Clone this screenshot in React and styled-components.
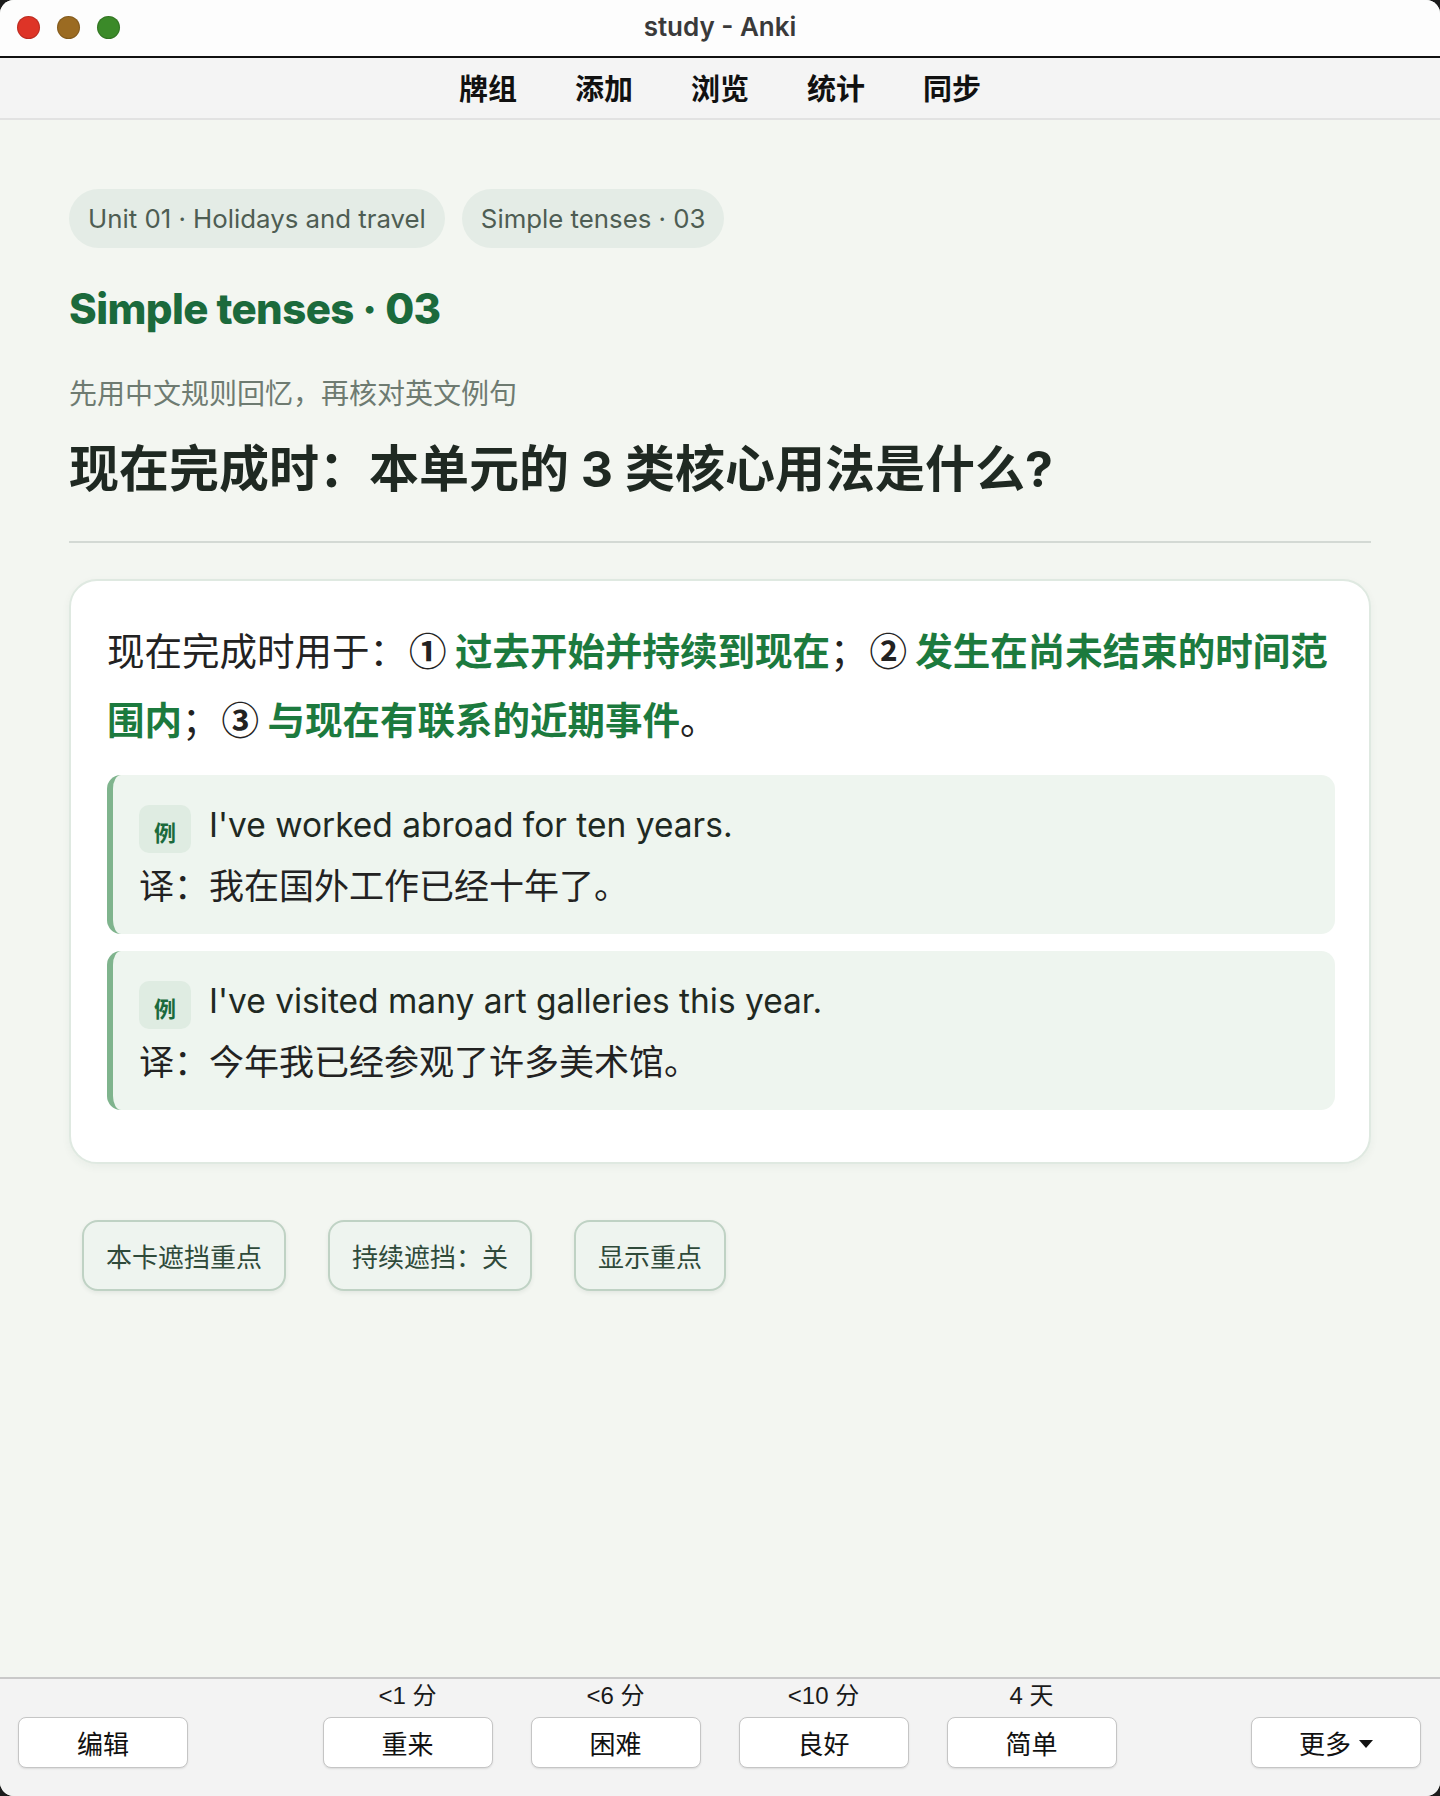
import styled, { createGlobalStyle } from "styled-components";

const GlobalStyle = createGlobalStyle`
  html, body {
    margin: 0;
    padding: 0;
    background: #1c1c1c;
  }
  * {
    box-sizing: border-box;
  }
`;

const SANS = `Inter, "Noto Sans CJK SC", sans-serif`;
const UI = `"Liberation Sans", "Noto Sans CJK SC", sans-serif`;

const Window = styled.div`
  min-height: 1796px;
  display: flex;
  flex-direction: column;
  border-radius: 14px;
  overflow: hidden;
  background: #f3f6f1;
  font-family: ${SANS};
`;

const TitleBar = styled.div`
  height: 58px;
  background: #fdfdfd;
  border-bottom: 2px solid #111;
  display: flex;
  align-items: center;
  position: relative;
  padding: 0 0 2px 17px;
`;

const Lights = styled.div`
  display: flex;
  gap: 17px;
`;

const Light = styled.span`
  width: 23px;
  height: 23px;
  border-radius: 50%;
  background: ${p => p.color};
  box-shadow: inset 0 0 0 1px rgba(0, 0, 0, 0.15);
`;

const WindowTitle = styled.div`
  position: absolute;
  left: 0;
  right: 0;
  top: 11px;
  text-align: center;
  font-size: 26px;
  font-weight: 600;
  color: #3a3a3a;
  pointer-events: none;
`;

const Toolbar = styled.nav`
  height: 62px;
  background: #f4f4f4;
  border-bottom: 2px solid #e2e2e2;
  display: flex;
  justify-content: center;
  align-items: center;
  gap: 58px;
  padding-bottom: 3px;
`;

const NavItem = styled.a`
  font-family: "Noto Sans CJK SC", sans-serif;
  font-size: 29px;
  font-weight: 700;
  color: #111;
  cursor: pointer;
`;

const Main = styled.main`
  flex: 1;
  padding: 69px 69px 0;
`;

const Pills = styled.div`
  display: flex;
  gap: 17px;
`;

const Pill = styled.span`
  height: 59px;
  padding: 0 19px;
  border-radius: 30px;
  background: #e4ece6;
  color: #4e5d53;
  font-size: 25.8px;
  display: flex;
  align-items: center;
`;

const DeckTitle = styled.h1`
  margin: 37px 0 0;
  font-size: 42px;
  line-height: 48px;
  font-weight: 800;
  letter-spacing: -0.6px;
  color: #1b6a3c;
`;

const Hint = styled.div`
  margin-top: 41px;
  font-size: 28px;
  line-height: 36px;
  color: #6e7b71;
  font-family: "Noto Sans CJK SC", sans-serif;
`;

const Question = styled.h2`
  margin: 27px 0 0;
  font-size: 50px;
  line-height: 64px;
  font-weight: 700;
  color: #1f2922;
`;

const Divider = styled.hr`
  margin: 40px 0 0;
  border: none;
  border-top: 2px solid #d3d9d4;
`;

const Card = styled.section`
  margin-top: 36px;
  background: #fff;
  border: 2px solid #dfe9e1;
  border-radius: 28px;
  padding: 33px 30px 52px 36px;
  box-shadow: 0 3px 8px rgba(40, 70, 50, 0.05);
`;

const Answer = styled.p`
  margin: 0;
  font-family: "Noto Sans CJK SC", sans-serif;
  font-size: 37.5px;
  line-height: 69px;
  color: #222;
`;

const Hl = styled.strong`
  color: #1c7a3e;
  font-weight: 700;
`;

const Num = styled.span`
  font-weight: 700;
  margin-left: 2px;
`;

const Example = styled.div`
  margin: ${p => p.$first ? "23px" : "17px"} 4px 0 0;
  background: #eef5ef;
  border-left: 6px solid #7fb48d;
  border-radius: 14px;
  padding: 30px 28px 21px 26px;
`;

const ExampleRow = styled.div`
  display: flex;
  align-items: center;
  gap: 18px;
  height: 48px;
`;

const Badge = styled.span`
  width: 52px;
  height: 48px;
  border-radius: 10px;
  background: #dfece2;
  color: #1b6a3c;
  font-family: "Noto Sans CJK SC", sans-serif;
  font-weight: 700;
  font-size: 22px;
  display: flex;
  align-items: center;
  justify-content: center;
  padding-top: 4px;
`;

const Sentence = styled.span`
  font-size: 33.5px;
  color: #1f2922;
  margin-top: -8px;
`;

const Translation = styled.div`
  margin-top: 2px;
  font-family: "Noto Sans CJK SC", sans-serif;
  font-size: 35px;
  line-height: 58px;
  color: #222;
`;

const Tools = styled.div`
  display: flex;
  gap: 42px;
  margin: 56px 0 0 13px;
`;

const ToolButton = styled.button`
  height: 71px;
  padding: 0 22px;
  border: 2px solid #bfd2c4;
  border-radius: 16px;
  background: #eef4ef;
  color: #2f4a3a;
  font-family: "Noto Sans CJK SC", sans-serif;
  font-size: 26px;
  box-shadow: 0 2px 4px rgba(40, 70, 50, 0.08);
  cursor: pointer;
`;

const BottomBar = styled.footer`
  height: 119px;
  border-top: 2px solid #c9c9c9;
  background: #f3f3f3;
  display: grid;
  grid-template-columns: 1fr auto 1fr;
  align-items: end;
  padding: 0 19px 28px 18px;
`;

const Ease = styled.div`
  display: flex;
  gap: 38px;
`;

const EaseCol = styled.div`
  display: flex;
  flex-direction: column;
  align-items: center;
  gap: 4px;
`;

const Due = styled.span`
  font-family: ${UI};
  font-size: 24px;
  line-height: 34px;
  color: #1a1a1a;
`;

const BarButton = styled.button`
  width: 170px;
  height: 51px;
  background: #fff;
  border: 1.5px solid #c5c5c5;
  border-radius: 8px;
  box-shadow: 0 1px 2px rgba(0, 0, 0, 0.1);
  font-family: ${UI};
  font-size: 26px;
  color: #111;
  justify-self: ${p => p.$side || "center"};
  display: flex;
  align-items: center;
  justify-content: center;
  gap: 8px;
  cursor: pointer;
`;

const Caret = styled.span`
  width: 0;
  height: 0;
  border-left: 7px solid transparent;
  border-right: 7px solid transparent;
  border-top: 8px solid #111;
  margin-top: 3px;
`;

const examples = [
  { en: "I've worked abroad for ten years.", zh: "我在国外工作已经十年了。" },
  { en: "I've visited many art galleries this year.", zh: "今年我已经参观了许多美术馆。" },
];

const answers = [
  { due: "<1 分", label: "重来" },
  { due: "<6 分", label: "困难" },
  { due: "<10 分", label: "良好" },
  { due: "4 天", label: "简单" },
];

export default function App() {
  return (
    <>
      <GlobalStyle />
      <Window>
        <TitleBar>
          <Lights>
            <Light color="#de3427" />
            <Light color="#9b6b22" />
            <Light color="#3b8a29" />
          </Lights>
          <WindowTitle>study - Anki</WindowTitle>
        </TitleBar>
        <Toolbar>
          {["牌组", "添加", "浏览", "统计", "同步"].map(t => (
            <NavItem key={t}>{t}</NavItem>
          ))}
        </Toolbar>
        <Main>
          <Pills>
            <Pill>Unit 01 · Holidays and travel</Pill>
            <Pill>Simple tenses · 03</Pill>
          </Pills>
          <DeckTitle>Simple tenses · 03</DeckTitle>
          <Hint>先用中文规则回忆，再核对英文例句</Hint>
          <Question>现在完成时：本单元的 3 类核心用法是什么?</Question>
          <Divider />
          <Card>
            <Answer>
              现在完成时用于：<Num>①</Num> <Hl>过去开始并持续到现在</Hl>；<Num>②</Num>{" "}
              <Hl>发生在尚未结束的时间范围内</Hl>；<Num>③</Num> <Hl>与现在有联系的近期事件</Hl>。
            </Answer>
            {examples.map((ex, i) => (
              <Example key={i} $first={i === 0}>
                <ExampleRow>
                  <Badge>例</Badge>
                  <Sentence>{ex.en}</Sentence>
                </ExampleRow>
                <Translation>译：{ex.zh}</Translation>
              </Example>
            ))}
          </Card>
          <Tools>
            <ToolButton>本卡遮挡重点</ToolButton>
            <ToolButton>持续遮挡：关</ToolButton>
            <ToolButton>显示重点</ToolButton>
          </Tools>
        </Main>
        <BottomBar>
          <BarButton $side="start">编辑</BarButton>
          <Ease>
            {answers.map(a => (
              <EaseCol key={a.label}>
                <Due>{a.due}</Due>
                <BarButton>{a.label}</BarButton>
              </EaseCol>
            ))}
          </Ease>
          <BarButton $side="end">
            更多<Caret />
          </BarButton>
        </BottomBar>
      </Window>
    </>
  );
}
